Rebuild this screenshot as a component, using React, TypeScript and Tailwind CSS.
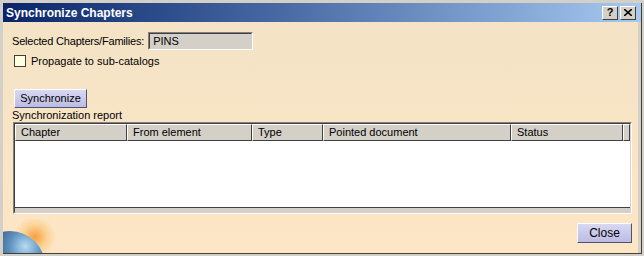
import React from "react"

const columns = [
  { label: "Chapter", width: "w-[112px]" },
  { label: "From element", width: "w-[125px]" },
  { label: "Type", width: "w-[71px]" },
  { label: "Pointed document", width: "w-[188px]" },
  { label: "Status", width: "w-[112px]" },
]

function Planet() {
  return (
    <div className="absolute left-[0px] bottom-[0px] w-[58px] h-[34px] overflow-hidden pointer-events-none">
      <div className="absolute left-[10px] top-[-2px] w-[44px] h-[40px] rounded-full bg-[radial-gradient(circle,rgba(250,150,50,0.9)_0%,rgba(250,195,110,0.55)_40%,rgba(253,230,195,0)_70%)]" />
      <div className="absolute left-[-28px] top-[12px] w-[70px] h-[70px] rounded-full bg-[radial-gradient(circle_at_72%_22%,#b7dcf2_0%,#5b8fbe_22%,#2e4668_50%,#1a2230_100%)]" />
    </div>
  )
}

export default function App() {
  return (
    <div
      className="w-[644px] h-[256px] bg-[#d4d0c8] p-[3px] pr-[2px] pb-[2px] flex flex-col text-[11px] text-black"
      style={{ fontFamily: "'Liberation Sans', Arial, sans-serif" }}
    >
      <div className="flex-1 flex flex-col border-r border-b border-r-[#404040] border-b-[#404040]">
        {/* Title bar */}
        <div className="h-[19px] flex items-center pl-[3px] pr-[2px] bg-gradient-to-r from-[#0a246a] to-[#a6caf0]">
          <span className="text-white font-bold text-[12px] flex-1">Synchronize Chapters</span>
          <div className="flex gap-[2px] mr-[3px]">
            <div className="w-[16px] h-[14px] bg-[#d4d0c8] border border-t-white border-l-white border-r-[#404040] border-b-[#404040] flex items-center justify-center text-[11px] font-bold leading-none">
              ?
            </div>
            <div className="w-[16px] h-[14px] bg-[#d4d0c8] border border-t-white border-l-white border-r-[#404040] border-b-[#404040] flex items-center justify-center">
              <svg width="8" height="7" viewBox="0 0 8 7">
                <path d="M0 0 L8 7 M8 0 L0 7" stroke="black" strokeWidth="1.6" />
              </svg>
            </div>
          </div>
        </div>

        {/* Body */}
        <div className="relative flex-1 flex flex-col bg-gradient-to-b from-[#f4e3c6] to-[#fde6c5] pl-[9px] pr-[6px] mr-[3px]">
          <div className="flex items-center mt-[10px] h-[18px]">
            <span className="mr-[4px] tracking-[-0.2px]">Selected Chapters/Families:</span>
            <div className="w-[105px] h-[18px] bg-[#d4d0c8] border border-t-[#808080] border-l-[#808080] border-r-white border-b-white flex items-center">
              <div className="w-full h-full border border-t-[#404040] border-l-[#404040] border-r-[#d4d0c8] border-b-[#d4d0c8] pl-[3px] flex items-center">
                PINS
              </div>
            </div>
          </div>

          <div className="flex items-center mt-[4px] h-[14px] ml-[2px]">
            <div className="w-[12px] h-[12px] bg-[#ffffe0] border border-[#404040] mr-[5px]" />
            <span>Propagate to sub-catalogs</span>
          </div>

          <div className="mt-[21px] ml-[2px]">
            <div className="w-[73px] h-[19px] bg-gradient-to-b from-[#d8d8f2] to-[#bcbce4] border border-t-white border-l-white border-r-[#505070] border-b-[#505070] flex items-center justify-center">
              Synchronize
            </div>
          </div>

          <div className="h-[14px] leading-[14px]">Synchronization report</div>

          {/* Report table */}
          <div className="ml-[1px] border border-t-[#808080] border-l-[#808080] border-r-white border-b-white">
            <div className="border border-t-[#404040] border-l-[#404040] border-r-[#d4d0c8] border-b-[#d4d0c8] bg-white">
              <div className="flex h-[17px] bg-[#d4d0c8]">
                {columns.map((c) => (
                  <div
                    key={c.label}
                    className={`${c.width} h-full border-t border-l border-t-white border-l-white border-r border-b border-r-[#404040] border-b-[#404040] pl-[5px] flex items-center`}
                  >
                    {c.label}
                  </div>
                ))}
                <div className="flex-1 h-full border-t border-l border-t-white border-l-white border-r border-b border-r-[#404040] border-b-[#404040]" />
              </div>
              <div className="h-[66px] bg-white" />
              <div className="h-[5px] bg-[#d4d0c8] border-t border-t-[#404040]" />
            </div>
          </div>

          <div className="flex justify-end mt-[9px]">
            <div className="w-[55px] h-[20px] bg-gradient-to-b from-[#d8d8f2] to-[#bcbce4] border border-t-white border-l-white border-r-[#505070] border-b-[#505070] flex items-center justify-center text-[12px]">
              Close
            </div>
          </div>

          <Planet />
        </div>
      </div>
    </div>
  )
}
